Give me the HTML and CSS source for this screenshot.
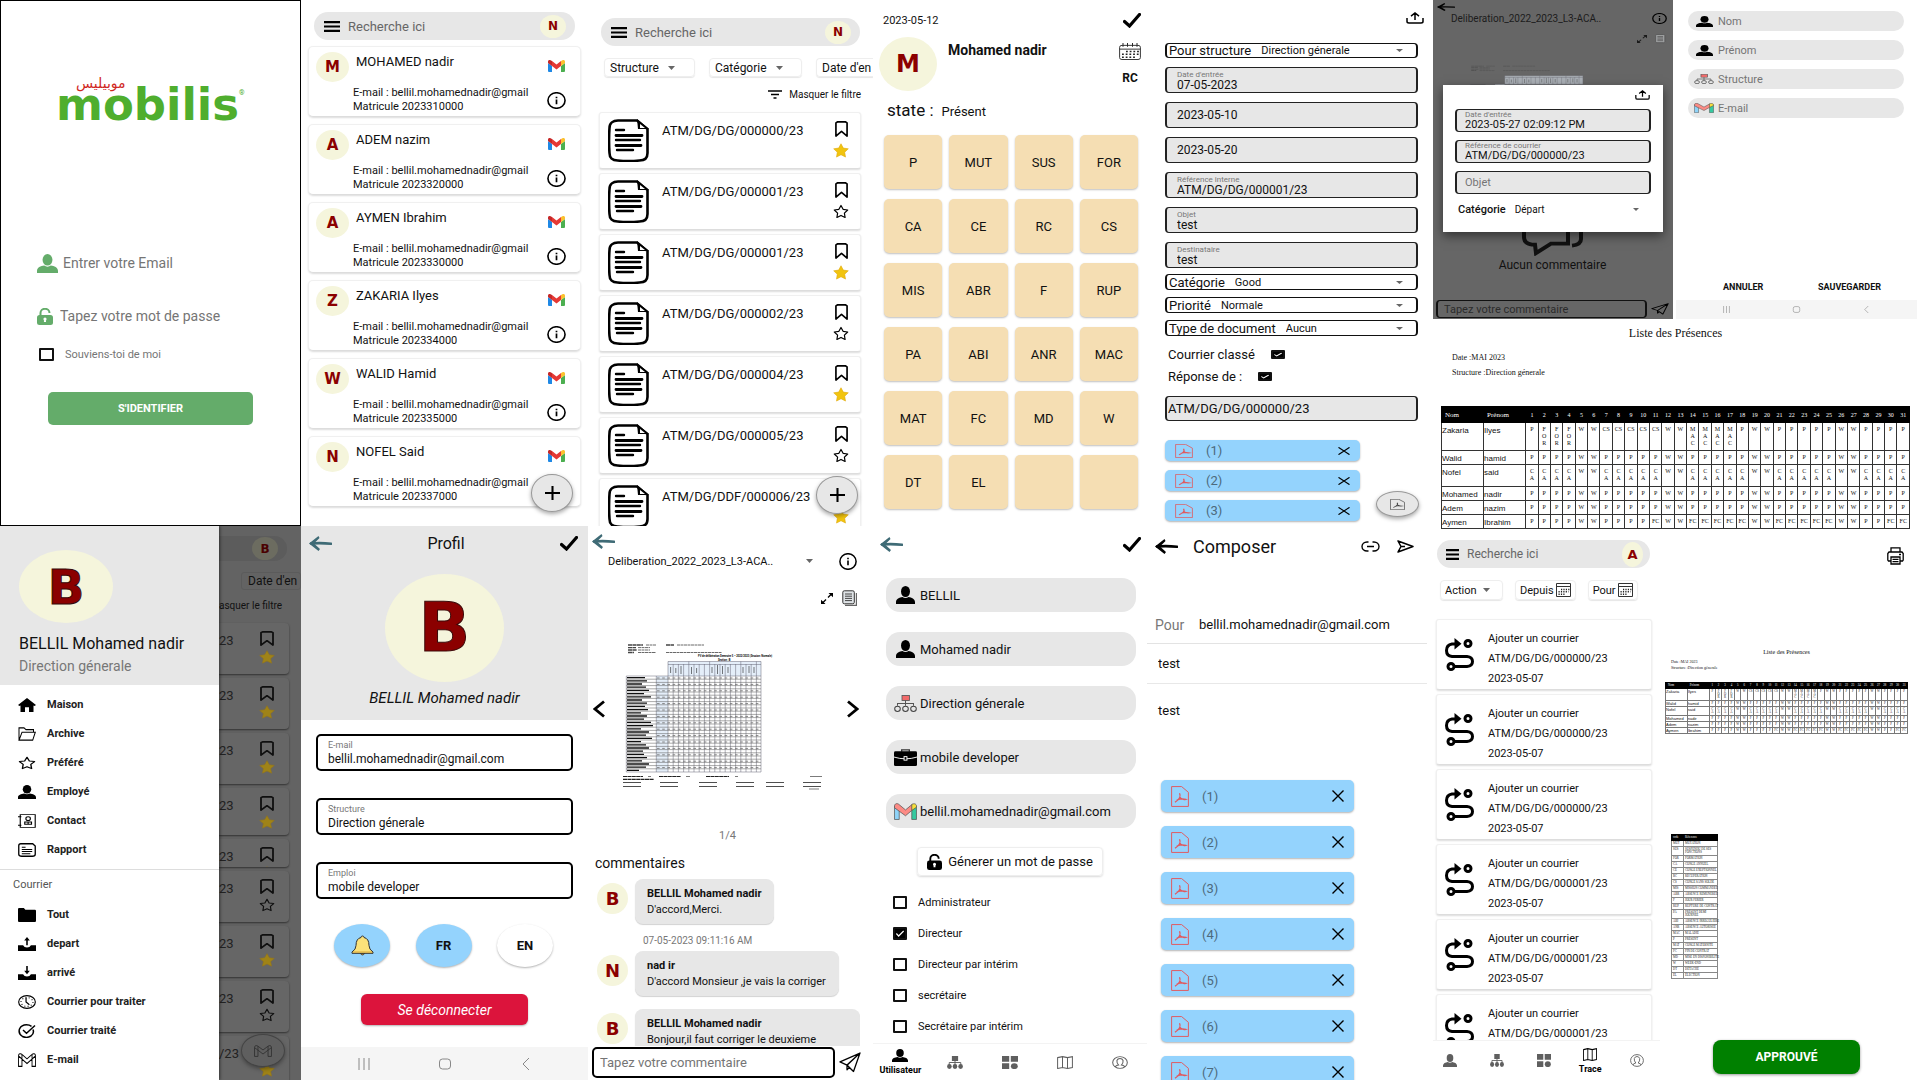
FILE: index.html
```html
<!DOCTYPE html>
<html lang="fr">
<head>
<meta charset="utf-8">
<title>Mobilis – Gestion du courrier</title>
<link rel="stylesheet" href="styles.css">
</head>
<body>
<svg class="sprite" aria-hidden="true">
  <symbol id="user" viewBox="0 0 22 18" preserveAspectRatio="none"><ellipse cx="11" cy="5.5" rx="5.2" ry="5.5"/><path d="M0 18v-2c0-3 4-4.6 7.5-5 2 1.4 5 1.4 7 0 3.500.4 7.500 2 7.500 5v2z"/></symbol>
  <symbol id="lock" viewBox="0 0 16 17" preserveAspectRatio="none"><path d="M3.500 8V5a4.500 4.200 0 0 1 9 0" fill="none" stroke="currentColor" stroke-width="2"/><rect y="7" width="16" height="10" rx="2.500"/><circle cx="8" cy="11" r="1.600" fill="#fff"/><path d="M7.300 11h1.400l.4 3H6.900z" fill="#fff"/></symbol>
  <symbol id="menu" viewBox="0 0 16 11" preserveAspectRatio="none"><path d="M0 1.200h16M0 5.500h16M0 9.800h16" stroke="currentColor" stroke-width="2.200"/></symbol>
  <symbol id="gmail" viewBox="0 0 17 12" preserveAspectRatio="none"><path d="M0 3l4 3v6H1a1 1 0 0 1-1-1z" fill="#1e88e5"/><path d="M17 3l-4 3v6h3a1 1 0 0 0 1-1z" fill="#4caf50"/><path d="M4 1l4.500 3.500L13 1v5L8.500 9.400 4 6z" fill="#e53935"/><path d="M0 3V1.500C0 0 1.800-.5 3 .4L4 1v5z" fill="#c62828"/><path d="M17 3V1.500C17 0 15.200-.5 14 .4L13 1v5z" fill="#fbc02d"/></symbol>
  <symbol id="gmail-soft" viewBox="0 0 22 16" preserveAspectRatio="none"><g stroke="#555" stroke-width=".7"><path d="M.500 3l4.500 4v8.500H.500z" fill="#8fd3f8"/><path d="M21.500 3L17 7v8.500h4.500z" fill="#35c9a0"/><path d="M.500 3C.500.500 3 0 4.500 1.200L11 6.500l6.500-5.300V6.600L11 12 .500 4.500z" fill="#fc8b85"/><path d="M17 7V1.500C19 0 21.500.700 21.500 3v1z" fill="#f7e03c"/></g></symbol>
  <symbol id="gmail-line" viewBox="0 0 20 13" preserveAspectRatio="none"><path d="M.600 2.600v9.800h3.800V5.600L10 9.800l5.600-4.200v6.800h3.800V2.600C19.400.400 17 .200 15.600 1.300L10 5.400 4.400 1.300C3 .200.600.400.600 2.600zM4.400 5.600L.6 2.800M15.600 5.600l3.800-2.800M4.400 1.300v4.300M15.600 1.300v4.300" fill="none" stroke="currentColor"/></symbol>
  <symbol id="info" viewBox="0 0 20 18" preserveAspectRatio="none"><ellipse cx="10" cy="9" rx="9" ry="8.200" fill="none" stroke="currentColor" stroke-width="1.700"/><path d="M10 8v5M10 5v1.600" stroke="currentColor" stroke-width="1.800"/></symbol>
  <symbol id="plus" viewBox="0 0 16 14" preserveAspectRatio="none"><path d="M0 7h16M8 0v14" stroke="currentColor" stroke-width="2.200"/></symbol>
  <symbol id="doc" viewBox="0 0 41 43" preserveAspectRatio="none"><path d="M10 1.500h19L39.500 10v24c0 5-3 7.500-8 7.500-7 .7-15 .7-22 0-5 0-8-2.500-8-7.500-.6-8-.6-17 0-25C1.500 4 5 1.500 10 1.500z" fill="none" stroke="currentColor" stroke-width="2.600"/><path d="M29 0l12 10h-11z" /><path d="M32 5l5 4h-5z" fill="#fff"/><path d="M8 11h8M8 21h24M9 31h16" stroke="currentColor" stroke-width="2.400" stroke-linecap="round"/><path d="M8 16.500h26M8 26.500h25" stroke="currentColor" stroke-width="2.800" stroke-linecap="round"/></symbol>
  <symbol id="mark" viewBox="0 0 14 17" preserveAspectRatio="none"><path d="M2.500 1h9l1.500 1v14l-6-5-6 5V2z" fill="none" stroke="currentColor" stroke-width="1.800" stroke-linejoin="round"/></symbol>
  <symbol id="star" viewBox="0 0 16 16" preserveAspectRatio="none"><path d="M8 .8l2.300 4.600 5 .8-3.600 3.600.8 5.200L8 12.500 3.500 15l.8-5.200L.7 6.200l5-.8z" fill="#f1c40f" stroke="#e0a80b" stroke-width=".6"/></symbol>
  <symbol id="star-line" viewBox="0 0 16 16" preserveAspectRatio="none"><path d="M8 1.500l2.100 4.200 4.600.7-3.300 3.300.7 4.700L8 12.200l-4.100 2.200.7-4.700L1.300 6.400l4.600-.7z" fill="none" stroke="currentColor" stroke-width="1.200" stroke-linejoin="round"/></symbol>
  <symbol id="caret" viewBox="0 0 8 4" preserveAspectRatio="none"><path d="M0 0h8L4 4z" fill="#666"/></symbol>
  <symbol id="filter" viewBox="0 0 14 9" preserveAspectRatio="none"><path d="M0 1h14M3 4.500h8M5.500 8h3" stroke="currentColor" stroke-width="1.400"/></symbol>
  <symbol id="check" viewBox="0 0 18 15" preserveAspectRatio="none"><path d="M1.500 8.500l5 4.500L16.500 1.500" fill="none" stroke="currentColor" stroke-width="3.200" stroke-linecap="round"/></symbol>
  <symbol id="calendar" viewBox="0 0 22 18" preserveAspectRatio="none"><path d="M3 2.500h16q2.400 0 2.400 2v11q0 2-2.400 2H3q-2.400 0-2.400-2v-11q0-2 2.400-2zM.6 6.500h20.800" fill="none" stroke="#333"/><path d="M4 0v4M8.500 0v4M13.500 0v4M18 0v4" stroke="#222"/><path d="M7 9h13M3 12h17M3 15h13" stroke="#222" stroke-width="1.600" stroke-dasharray="1.800 1.900"/></symbol>
  <symbol id="month" viewBox="0 0 15 14" preserveAspectRatio="none"><path d="M.5.500h14v13H.5zM.5 3.500h14" fill="none" stroke="#333"/><path d="M5 6.500h9M2.500 8.800h10M2.500 11.200h7" stroke="#222" stroke-width="1.400" stroke-dasharray="1.200 1.200"/></symbol>
  <symbol id="upload" viewBox="0 0 18 12" preserveAspectRatio="none"><path d="M1 6v3.500Q1 11 3 11h12q2 0 2-1.500V6M9 8V1M5 4.200L9 1l4 3.200" fill="none" stroke="currentColor" stroke-width="1.500"/></symbol>
  <symbol id="pdf" viewBox="0 0 18 22" preserveAspectRatio="none"><path d="M.6.600h10l6.800 6v14.800H.6z" fill="none" stroke="currentColor"/><path d="M8.500 7.500c1.500 3 .5 6-4.500 9.500M8.800 11.500q2 3.500 6 2.500-4-1.500-9 .8" fill="none" stroke="currentColor" stroke-width="1.300"/></symbol>
  <symbol id="cross" viewBox="0 0 12 12" preserveAspectRatio="none"><path d="M.5.500l11 11M11.500.500l-11 11" stroke="currentColor" stroke-width="1.400"/></symbol>
  <symbol id="arrow" viewBox="0 0 23 15" preserveAspectRatio="none"><path d="M2 7.500q10-.8 20 .3" fill="none" stroke="currentColor" stroke-width="2.600" stroke-linecap="round"/><path d="M0 7.500L9.500 0l1 2-5.500 5.500 6 5.500-1.500 2z"/></symbol>
  <symbol id="org" viewBox="0 0 23 16" preserveAspectRatio="none"><path d="M11.500 5v5M3.500 10V8h16v2" fill="none" stroke="#555"/><rect x="8" y=".5" width="7.500" height="4.600" fill="#f26b6b" stroke="#555" stroke-width=".8"/><g fill="none" stroke="#444"><ellipse cx="3.500" cy="13" rx="2.800" ry="2.500"/><ellipse cx="11.500" cy="13" rx="2.800" ry="2.500"/><ellipse cx="19.500" cy="13" rx="2.800" ry="2.500"/></g></symbol>
  <symbol id="org-solid" viewBox="0 0 18 13" preserveAspectRatio="none"><path d="M9 4v6M2.500 10V6.500h13V10" fill="none" stroke="currentColor"/><rect x="5.500" width="7" height="5"/><ellipse cx="2.700" cy="10.500" rx="2.600" ry="2.400"/><ellipse cx="9" cy="10.500" rx="2.600" ry="2.400"/><ellipse cx="15.300" cy="10.500" rx="2.600" ry="2.400"/></symbol>
  <symbol id="case" viewBox="0 0 24 19" preserveAspectRatio="none"><path d="M8 3V1h8v2" fill="none" stroke="#333" stroke-width="1.400"/><rect y="2.500" width="24" height="16.500" rx="1.500"/><path d="M0 9q12 4 24 0" fill="none" stroke="#fff"/><rect x="10.500" y="8.500" width="3" height="4" fill="#000" stroke="#fff"/></symbol>
  <symbol id="expand" viewBox="0 0 12 11" preserveAspectRatio="none"><path d="M7 4.500l4-4M5 6.500l-4 4" stroke="currentColor" stroke-width="1.300"/><path d="M7.500 0H12v4.300zM4.500 11H0V6.700z"/></symbol>
  <symbol id="copy" viewBox="0 0 15 16" preserveAspectRatio="none"><path d="M3 15.500h11.500V3" fill="none" stroke="#666" stroke-width="1.400"/><rect x=".8" y=".8" width="11.500" height="13" rx="1.500" fill="#dfe3e6" stroke="#333"/><path d="M3 4h7M3 6.200h7M3 8.400h7M3 10.600h7" stroke="#333" stroke-width=".9"/></symbol>
  <symbol id="send" viewBox="0 0 22 20" preserveAspectRatio="none"><path d="M21 1L1 9.500l7 3L21 1l-6.500 17.500L8 12.500V17l2.500-2.500" fill="none" stroke="currentColor" stroke-width="1.300" stroke-linejoin="round"/></symbol>
  <symbol id="send-flat" viewBox="0 0 17 13" preserveAspectRatio="none"><path d="M1 1l15 5.500L1 12l3-5.500zM4 6.500h4" fill="none" stroke="currentColor" stroke-width="1.500" stroke-linejoin="round"/></symbol>
  <symbol id="link" viewBox="0 0 19 11" preserveAspectRatio="none"><path d="M7.500 1H6a5 4.500 0 0 0 0 9h1.500M11.500 1H13a5 4.500 0 0 1 0 9h-1.500M6 5.500h7" fill="none" stroke="currentColor" stroke-width="1.400"/></symbol>
  <symbol id="left" viewBox="0 0 12 18" preserveAspectRatio="none"><path d="M11 1.500L2 9l9 7.500" fill="none" stroke="currentColor" stroke-width="2.800"/></symbol>
  <symbol id="home" viewBox="0 0 18 13" preserveAspectRatio="none"><path d="M9 0l9 6.500-1.500 1L15.500 7v6H11V8.500H7V13H2.500V7l-1 .5L0 6.500z"/></symbol>
  <symbol id="open" viewBox="0 0 18 12" preserveAspectRatio="none"><path d="M1 11.300V.700h5L8 2.300h7.500V4.500M1 11.300L4 4.500h13.300l-2.600 6.800z" fill="none" stroke="currentColor"/></symbol>
  <symbol id="folder" viewBox="0 0 17 12" preserveAspectRatio="none"><path d="M0 1Q0 0 1 0h4.500L7 1.500h9q1 0 1 1V11q0 1-1 1H1q-1 0-1-1z"/></symbol>
  <symbol id="contact" viewBox="0 0 16 15" preserveAspectRatio="none"><path d="M2 .700h13.300v13.600H2zM0 3h3M0 12h3" fill="none" stroke="currentColor"/><circle cx="9" cy="5" r="2" fill="none" stroke="currentColor"/><path d="M6 11V8.500h6V11zM9 9v2" fill="none" stroke="currentColor"/></symbol>
  <symbol id="report" viewBox="0 0 19 15" preserveAspectRatio="none"><path d="M3 .800h12.500l2.700 2.500V12q0 2.200-3 2.200H4Q.8 14.200.8 12V3Q.8.800 3 .800z" fill="none" stroke="currentColor" stroke-width="1.400"/><path d="M4 4.500h4M4 7h11M4 9.200h11M4 11.400h9" stroke="currentColor" stroke-width="1.100"/></symbol>
  <symbol id="outbox" viewBox="0 0 16 12" preserveAspectRatio="none"><path d="M0 7h4.500q1 2 3.500 2t3.500-2H16v5H0zM7.300 7V3H5.500L8 0l2.500 3H8.700v4z"/></symbol>
  <symbol id="inbox" viewBox="0 0 16 12" preserveAspectRatio="none"><path d="M0 7h4.500q1 2 3.500 2t3.500-2H16v5H0zM7.300 0v4H5.500L8 7l2.500-3H8.700V0z"/></symbol>
  <symbol id="clock" viewBox="0 0 19 15" preserveAspectRatio="none"><ellipse cx="9.500" cy="7.500" rx="8.800" ry="6.800" fill="none" stroke="currentColor" stroke-width="1.200"/><ellipse cx="9.500" cy="7.500" rx="6.300" ry="4.700" fill="none" stroke="currentColor" stroke-width="1.200" stroke-dasharray="1 2.400"/><path d="M8.500 3v4.500l3.500 3" fill="none" stroke="currentColor" stroke-width="1.300"/></symbol>
  <symbol id="done" viewBox="0 0 18 14" preserveAspectRatio="none"><path d="M15 5.500q1.500 4-2 6.500-4 2.500-8.500.5-4.500-3-3-7.500Q3.500.800 8.500.800q3 0 5 1.600M5 6l3.500 3.200L17 1.500" fill="none" stroke="currentColor" stroke-width="1.500"/></symbol>
  <symbol id="bell" viewBox="0 0 23 21" preserveAspectRatio="none"><path d="M9 18q2.500 4 5 0z" fill="#c98a2b" stroke="#333" stroke-width=".8"/><path d="M11.500 1q1.500 0 1.500 1.500 5 1 5 8 0 4 4 6.500v1.300H1V17q4-2.500 4-6.500 0-7 5-8Q10 1 11.500 1z" fill="#fbe27a" stroke="#333"/><path d="M2 17h19" stroke="#d9a93c"/></symbol>
  <symbol id="tiles" viewBox="0 0 14 12" preserveAspectRatio="none"><path d="M0 0h6.300v5.300H0zM7.700 0H14v5.300H7.700zM0 6.700h6.300V12H0z"/><ellipse cx="10.800" cy="9.400" rx="3" ry="2.700"/></symbol>
  <symbol id="map" viewBox="0 0 16 12" preserveAspectRatio="none"><path d="M.600 1.500L5.500.600l5 .9 4.900-.9v10l-4.900.9-5-.9-4.900.9zM5.500.600v10M10.500 1.500v10" fill="none" stroke="currentColor"/></symbol>
  <symbol id="account" viewBox="0 0 14 13" preserveAspectRatio="none"><ellipse cx="7" cy="6.500" rx="6.400" ry="5.900" fill="none" stroke="currentColor" stroke-width=".9"/><path d="M3 11q0-1.500 2.800-2Q4 7 4.300 4.500 5 2.500 7 2.500t2.700 2Q10 7 8.200 9q2.800.5 2.800 2" fill="none" stroke="currentColor" stroke-width=".9"/></symbol>
  <symbol id="route" viewBox="0 0 29 34" preserveAspectRatio="none"><g fill="none" stroke="currentColor" stroke-width="3"><circle cx="23" cy="5.500" r="3"/><circle cx="6" cy="28.500" r="3"/><path d="M9.500 28.500H22q5.500-.5 5.500-5t-5.500-5H7q-5.500-.5-5.500-6T7 6h7"/></g><path d="M9.500 0l7 5.700-7 5.800z"/></symbol>
  <symbol id="printer" viewBox="0 0 17 18" preserveAspectRatio="none"><path d="M4 5V.8h9V5M4 14H1.500L.8 13V6.500L2 5h13l1.200 1.500V13l-.7 1H13M4 10h9v7H4zM5.500 12.300h6M5.500 14.600h6M12 7.500h2" fill="none" stroke="currentColor" stroke-width="1.300"/></symbol>
  <symbol id="chat" viewBox="0 0 61 58" preserveAspectRatio="none"><path d="M2 2h44v43H29L14 55l-1-9H10q-8-1-8-8zM50 8h9v32q0 6-9 7" fill="none" stroke="currentColor" stroke-width="4"/></symbol>
  <symbol id="sheet" viewBox="0 0 200 148" preserveAspectRatio="none">
    <g stroke="#444"><path d="M5 2h15M5 4.600h8M5 7h9M5 9.500h6M43 2h8" stroke-width="1.400" stroke-dasharray="4 .4"/><path d="M23 2h10M15 4.600h12M15 7h12M15 9.500h18M54 2h27M43 9.500h56" stroke-width=".8" stroke-dasharray="3 .5"/></g>
    <path d="M45 18.500h93V33H45zM33.300 33H45v96H33.300z" fill="#e4eef9"/>
    <g stroke="#667" stroke-width=".5"><path d="M45 18.500h93M45 21.500h93M3.300 33H138M3.300 129H138"/><path d="M45 18.500V129M50.200 21V129M55.400 21V129M60.600 21V129M65.800 18.500V129M71 21V129M76.200 21V129M81.400 21V129M86.600 18.500V129M91.800 21V129M97 21V129M102.200 21V129M107.400 21V129M112.600 21V129M117.800 18.500V129M123 21V129M128.200 21V129M133.400 18.500V129M138 18.500V129M3.300 33V129M33.300 33V129"/></g>
    <g fill="none" stroke="#555" stroke-width=".5"><path d="M3.300 36.200H138M3.300 39.400H138M3.300 42.600H138M3.300 45.800H138M3.300 49H138M3.300 52.200H138M3.300 55.400H138M3.300 58.600H138M3.300 61.800H138M3.300 65H138M3.300 68.200H138M3.300 71.400H138M3.300 74.600H138M3.300 77.800H138M3.300 81H138M3.300 84.200H138M3.300 87.400H138M3.300 90.600H138M3.300 93.800H138M3.300 97H138M3.300 100.200H138M3.300 103.400H138M3.300 106.600H138M3.300 109.800H138M3.300 113H138M3.300 116.200H138M3.300 119.400H138M3.300 122.600H138M3.300 125.800H138"/></g>
    <g fill="none" stroke="#111" stroke-width="1.300"><path d="M4 34.600h18M4 37.800h20M4 41h15M4 44.200h19M4 47.400h22M4 50.600h17M4 53.800h24M4 57h15M4 60.200h20M4 63.400h18M4 66.600h21M4 69.800h14M4 73h20M4 76.200h17M4 79.400h24M4 82.600h26M4 85.800h14M4 89h22M4 92.200h19M4 95.400h25M4 98.600h14M4 101.800h19M4 105h22M4 108.200h16M4 111.400h17M4 114.600h20M4 117.800h15M4 121h22M4 124.200h19M4 127.400h12"/></g>
    <g fill="none" stroke="#777" stroke-width=".9" stroke-dasharray="2.600 2.600"><path d="M34 35H137M34 41.400H137M34 47.800H137M34 54.200H137M34 60.600H137M34 67H137M34 73.400H137M34 79.800H137M34 86.200H137M34 92.600H137M34 99H137M34 105.400H137M34 111.800H137M34 118.200H137M34 124.600H137"/></g>
    <g stroke="#222" fill="none"><path d="M47.600 24v6M52.800 25v5M58 23v8M68.500 24v7M73.600 25v5M89 24v6M94.500 22v9M99.500 23v8M105 24v6M120 24v6M126 23v7M131 24v6" stroke-width=".6"/><path d="M0 133.500h20M36 133.500h22M83 133.500h23M0 136.400h31" stroke-width="1.200" stroke-dasharray="4 .4"/><path d="M25 133.500h3M63 133.500h4M112 133.500h3M187 133.500h12M186 146h10" stroke-width=".6"/><path d="M0 139.500h18M37 139.500h18M76 139.500h18M113 139.500h18M143 139.500h18M180 139.500h18M0 143.500h18M37 143.500h18M76 143.500h18M113 143.500h18M143 143.500h18M180 143.500h18" stroke-width=".8"/></g>
  </symbol>
</svg>

<main class="board">

  <section class="screen login">
    <div class="logo"><span class="logo-ar" lang="ar" dir="rtl">موبيليس</span><span class="logo-row"><span class="logo-word">mobilis</span><span class="logo-reg">®</span></span></div>
    <form class="login-form">
      <label class="login-row"><svg class="i22"><use href="#user"/></svg><input type="email" placeholder="Entrer votre Email"></label>
      <label class="login-row pass"><svg class="i17"><use href="#lock"/></svg><input type="password" placeholder="Tapez votre mot de passe"></label>
      <label class="remember"><input type="checkbox" class="tick">Souviens-toi de moi</label>
      <button type="button" class="login-btn">S'IDENTIFIER</button>
    </form>
  </section>

  <section class="screen contacts">
    <div class="search"><svg><use href="#menu"/></svg><input aria-label="Recherche" placeholder="Recherche ici"><span class="ava ava-s">N</span></div>
    <div class="contact-list" id="contacts"></div>
    <button class="fab" aria-label="Ajouter"><svg><use href="#plus"/></svg></button>
  </section>

  <section class="screen mails">
    <div class="search"><svg><use href="#menu"/></svg><input aria-label="Recherche" placeholder="Recherche ici"><span class="ava ava-s">N</span></div>
    <div class="filters">
      <span class="drop"><select aria-label="Structure"><option>Structure</option></select><svg><use href="#caret"/></svg></span>
      <span class="drop"><select aria-label="Catégorie"><option>Catégorie</option></select><svg><use href="#caret"/></svg></span>
      <button class="drop">Date d'en</button>
    </div>
    <button class="hide-filter"><svg><use href="#filter"/></svg>Masquer le filtre</button>
    <div class="mail-list" id="mails"></div>
    <button class="fab" aria-label="Ajouter"><svg><use href="#plus"/></svg></button>
  </section>

  <section class="screen state">
    <div class="state-top"><span>2023-05-12</span><svg class="i-check"><use href="#check"/></svg></div>
    <div class="state-who"><span class="ava ava-m">M</span><h2>Mohamed nadir</h2><div class="state-code"><svg><use href="#calendar"/></svg><b>RC</b></div></div>
    <p class="state-line"><span>state :</span>Présent</p>
    <div class="codes" id="codes"></div>
  </section>

  <section class="screen record">
    <svg class="i-up"><use href="#upload"/></svg>
    <form class="record-form">
      <label class="pick"><span>Pour structure</span><select><option>Direction génerale</option></select><svg><use href="#caret"/></svg></label>
      <div class="boxes">
        <label class="box"><span>Date d'entrée</span><input value="07-05-2023"></label>
        <div class="box"><input aria-label="Date de départ" value="2023-05-10"></div>
        <div class="box"><input aria-label="Date limite" value="2023-05-20"></div>
        <label class="box"><span>Référence interne</span><input value="ATM/DG/DG/000001/23"></label>
        <label class="box"><span>Objet</span><input value="test"></label>
        <label class="box"><span>Destinataire</span><input value="test"></label>
      </div>
      <div class="picks">
        <label class="pick"><span>Catégorie</span><select><option>Good</option></select><svg><use href="#caret"/></svg></label>
        <label class="pick"><span>Priorité</span><select><option>Normale</option></select><svg><use href="#caret"/></svg></label>
        <label class="pick"><span>Type de document</span><select><option>Aucun</option></select><svg><use href="#caret"/></svg></label>
      </div>
      <label class="flag">Courrier classé<input type="checkbox" class="tick" checked></label>
      <label class="flag">Réponse de :<input type="checkbox" class="tick" checked></label>
      <div class="box reply"><input aria-label="Réponse de" value="ATM/DG/DG/000000/23"></div>
    </form>
    <div class="chips" id="chipsA"></div>
    <button class="fab flat" aria-label="Ajouter un PDF"><svg><use href="#pdf"/></svg></button>
  </section>

  <div class="side">
    <div class="pair">
      <section class="screen dimmed">
        <svg class="d-arrow"><use href="#arrow"/></svg>
        <div class="d-title"><span>Deliberation_2022_2023_L3-ACA..</span><svg class="d-caret"><use href="#caret"/></svg><svg class="d-info"><use href="#info"/></svg></div>
        <div class="d-tools"><svg><use href="#expand"/></svg><svg><use href="#copy"/></svg></div>
        <svg class="d-sheet"><use href="#sheet"/></svg>
        <div class="d-empty"><svg><use href="#chat"/></svg><p>Aucun commentaire</p></div>
        <div class="d-compose"><input aria-label="Commentaire" placeholder="Tapez votre commentaire"><svg><use href="#send"/></svg></div>
        <div class="dialog" role="dialog">
          <svg class="dg-up"><use href="#upload"/></svg>
          <label class="box"><span>Date d'entrée</span><input value="2023-05-27 02:09:12 PM"></label>
          <label class="box"><span>Référence de courrier</span><input value="ATM/DG/DG/000000/23"></label>
          <div class="box"><input aria-label="Objet" placeholder="Objet"></div>
          <label class="dg-cat"><b>Catégorie</b><select><option>Départ</option></select><svg><use href="#caret"/></svg></label>
        </div>
      </section>
      <section class="screen adduser">
        <div class="au-fields">
          <label class="pill"><svg class="p-user"><use href="#user"/></svg><input placeholder="Nom"></label>
          <label class="pill"><svg class="p-user"><use href="#user"/></svg><input placeholder="Prénom"></label>
          <label class="pill"><svg><use href="#org"/></svg><input placeholder="Structure"></label>
          <label class="pill"><svg><use href="#gmail-soft"/></svg><input placeholder="E-mail"></label>
        </div>
        <div class="au-actions"><button>ANNULER</button><button>SAUVEGARDER</button></div>
        <div class="sysbar"><svg viewBox="0 0 12 12"><path d="M1 0v12M6 0v12M11 0v12"/></svg><svg viewBox="0 0 12 12"><rect x=".5" y="1" width="11" height="10" rx="3"/></svg><svg viewBox="0 0 12 12"><path d="M9 0L3 6l6 6"/></svg></div>
      </section>
    </div>
    <section class="screen sheet-big">
      <h1>Liste des Présences</h1>
      <p>Date :MAI 2023</p>
      <p>Structure :Direction génerale</p>
      <table class="att" data-att></table>
    </section>
    <div class="pair low">
      <section class="screen trace">
        <div class="trace-body">
          <div class="search"><svg><use href="#menu"/></svg><input aria-label="Recherche" placeholder="Recherche ici"><span class="ava ava-s">A</span></div>
          <div class="filters">
            <span class="drop"><select aria-label="Action"><option>Action</option></select><svg><use href="#caret"/></svg></span>
            <button class="drop">Depuis<svg class="cal"><use href="#month"/></svg></button>
            <button class="drop">Pour<svg class="cal"><use href="#month"/></svg></button>
          </div>
          <div class="trace-list" id="traces"></div>
        </div>
        <nav class="tabs">
          <a href="#"><svg><use href="#user"/></svg></a><a href="#"><svg><use href="#org-solid"/></svg></a><a href="#"><svg><use href="#tiles"/></svg></a><a href="#" class="on"><svg><use href="#map"/></svg>Trace</a><a href="#"><svg><use href="#account"/></svg></a>
        </nav>
      </section>
      <section class="screen print">
        <svg class="i-print"><use href="#printer"/></svg>
        <h1>Liste des Présences</h1>
        <p>Date :MAI 2023</p>
        <p>Structure :Direction génerale</p>
        <table class="att mini" data-att></table>
        <table class="legend" id="legend"></table>
        <button class="approve">APPROUVÉ</button>
      </section>
    </div>
  </div>

  <section class="screen home">
    <aside class="drawer">
      <header><span class="ava ava-l">B</span><h2>BELLIL Mohamed nadir</h2><p>Direction génerale</p></header>
      <nav>
        <a href="#"><svg><use href="#home"/></svg>Maison</a>
        <a href="#"><svg><use href="#open"/></svg>Archive</a>
        <a href="#"><svg><use href="#star-line"/></svg>Préféré</a>
        <a href="#"><svg><use href="#user"/></svg>Employé</a>
        <a href="#"><svg><use href="#contact"/></svg>Contact</a>
        <a href="#"><svg><use href="#report"/></svg>Rapport</a>
      </nav>
      <h3>Courrier</h3>
      <nav class="second">
        <a href="#"><svg><use href="#folder"/></svg>Tout</a>
        <a href="#"><svg><use href="#outbox"/></svg>depart</a>
        <a href="#"><svg><use href="#inbox"/></svg>arrivé</a>
        <a href="#"><svg><use href="#clock"/></svg>Courrier pour traiter</a>
        <a href="#"><svg><use href="#done"/></svg>Courrier traité</a>
        <a href="#"><svg><use href="#gmail-line"/></svg>E-mail</a>
      </nav>
    </aside>
    <div class="behind">
      <div class="b-search"><span class="ava ava-s">B</span></div>
      <div class="b-date">Date d'en</div>
      <p>asquer le filtre</p>
      <div class="b-list" id="behind"></div>
      <button class="fab" aria-label="E-mail"><svg><use href="#gmail-line"/></svg></button>
    </div>
  </section>

  <section class="screen profile">
    <header>
      <div class="bar"><svg class="i-arrow"><use href="#arrow"/></svg><h2>Profil</h2><svg class="i-check"><use href="#check"/></svg></div>
      <span class="ava ava-xl">B</span>
      <p>BELLIL Mohamed nadir</p>
    </header>
    <div class="p-fields">
      <label><span>E-mail</span><input value="bellil.mohamednadir@gmail.com"></label>
      <label><span>Structure</span><input value="Direction génerale"></label>
      <label><span>Emploi</span><input value="mobile developer"></label>
    </div>
    <div class="p-buttons"><button aria-label="Notifications"><svg><use href="#bell"/></svg></button><button>FR</button><button class="off">EN</button></div>
    <button class="logout">Se déconnecter</button>
    <div class="sysbar"><svg viewBox="0 0 12 12"><path d="M1 0v12M6 0v12M11 0v12"/></svg><svg viewBox="0 0 12 12"><rect x=".5" y="1" width="11" height="10" rx="3"/></svg><svg viewBox="0 0 12 12"><path d="M9 0L3 6l6 6"/></svg></div>
  </section>

  <section class="screen viewer">
    <svg class="i-arrow"><use href="#arrow"/></svg>
    <div class="v-title"><select aria-label="Fichier"><option>Deliberation_2022_2023_L3-ACA..</option></select><svg class="v-caret"><use href="#caret"/></svg><svg class="v-info"><use href="#info"/></svg></div>
    <div class="v-tools"><svg><use href="#expand"/></svg><svg><use href="#copy"/></svg></div>
    <div class="v-page"><svg class="v-nav"><use href="#left"/></svg>
      <svg class="v-sheet" viewBox="0 0 200 148"><use href="#sheet" width="200" height="148"/><text x="75" y="13.500" font-size="2.600" font-weight="700">PV de délibération Semestre 5 – 2022/2023 (Session: Normale)</text><text x="95" y="17.500" font-size="2.600" font-weight="700">Section : B</text></svg>
      <svg class="v-nav next"><use href="#left"/></svg></div>
    <p class="v-count">1/4</p>
    <h3>commentaires</h3>
    <div class="comments">
      <div class="com"><span class="ava ava-c">B</span><div><b>BELLIL Mohamed nadir</b>D'accord,Merci.</div></div>
      <time>07-05-2023 09:11:16 AM</time>
      <div class="com"><span class="ava ava-c">N</span><div><b>nad ir</b>D'accord Monsieur ,je vais la corriger</div></div>
      <div class="com last"><span class="ava ava-c">B</span><div><b>BELLIL Mohamed nadir</b>Bonjour,il faut corriger le deuxieme</div></div>
    </div>
    <div class="compose"><input aria-label="Commentaire" placeholder="Tapez votre commentaire"><svg><use href="#send"/></svg></div>
  </section>

  <section class="screen employee">
    <div class="emp-body">
      <div class="bar"><svg class="i-arrow"><use href="#arrow"/></svg><svg class="i-check"><use href="#check"/></svg></div>
      <div class="emp-fields">
        <label class="pill"><svg class="p-user"><use href="#user"/></svg><input aria-label="Nom" value="BELLIL"></label>
        <label class="pill"><svg class="p-user"><use href="#user"/></svg><input aria-label="Prénom" value="Mohamed nadir"></label>
        <label class="pill"><svg><use href="#org"/></svg><input aria-label="Structure" value="Direction génerale"></label>
        <label class="pill"><svg><use href="#case"/></svg><input aria-label="Emploi" value="mobile developer"></label>
        <label class="pill"><svg><use href="#gmail-soft"/></svg><input aria-label="E-mail" value="bellil.mohamednadir@gmail.com"></label>
      </div>
      <button class="gen"><svg><use href="#lock"/></svg>Génerer un mot de passe</button>
      <div class="roles">
        <label><input type="checkbox" class="tick">Administrateur</label>
        <label><input type="checkbox" class="tick" checked>Directeur</label>
        <label><input type="checkbox" class="tick">Directeur par intérim</label>
        <label><input type="checkbox" class="tick">secrétaire</label>
        <label><input type="checkbox" class="tick">Secrétaire par intérim</label>
      </div>
    </div>
    <nav class="tabs">
      <a href="#" class="on"><svg><use href="#user"/></svg>Utilisateur</a><a href="#"><svg><use href="#org-solid"/></svg></a><a href="#"><svg><use href="#tiles"/></svg></a><a href="#"><svg><use href="#map"/></svg></a><a href="#"><svg><use href="#account"/></svg></a>
    </nav>
  </section>

  <section class="screen composer">
    <div class="bar"><svg class="i-arrow"><use href="#arrow"/></svg><h2>Composer</h2><svg class="i-link"><use href="#link"/></svg><svg class="i-send"><use href="#send-flat"/></svg></div>
    <label class="to"><span>Pour</span><input value="bellil.mohamednadir@gmail.com"></label>
    <input class="subject" aria-label="Objet" value="test">
    <textarea class="body" aria-label="Message">test</textarea>
    <div class="chips tall" id="chipsB"></div>
  </section>
</main>
<script src="script.js"></script>
</body>
</html>
```
FILE: styles.css
```css
* { box-sizing: border-box; }
body { margin: 0; font-family: Roboto, "Liberation Sans", sans-serif; font-size: 11px; color: #111; background: #fff; }
h1, h2, h3, p { margin: 0; font-weight: 400; }
button, input, select, textarea { font: inherit; color: inherit; background: none; border: 0; padding: 0; margin: 0; outline: 0; min-width: 0; }
select { appearance: none; }
a { color: inherit; text-decoration: none; }
svg { display: block; flex: none; fill: currentColor; color: #000; overflow: visible; }
::placeholder { color: #757575; opacity: 1; }
.sprite { position: absolute; width: 0; height: 0; overflow: hidden; }

.board { display: grid; height: 100vh; overflow: hidden;
  grid-template-columns: minmax(0, 301fr) minmax(0, 287fr) minmax(0, 285fr) minmax(0, 274fr) minmax(0, 286fr) minmax(0, 487fr);
  grid-template-rows: minmax(0, 526fr) minmax(0, 554fr); }
.screen { position: relative; overflow: hidden; min-width: 0; min-height: 0; background: #fff; }
.side { grid-column: 6; grid-row: 1 / 3; display: grid; grid-template-rows: minmax(0, 319fr) minmax(0, 211fr) minmax(0, 550fr); }
.pair { display: grid; grid-template-columns: minmax(0, 240fr) minmax(0, 241fr); column-gap: 3px; padding-right: 3px; }
.pair.low { grid-template-columns: minmax(0, 227fr) minmax(0, 260fr); column-gap: 0; padding-right: 0; }

/* shared pieces */
.ava { display: flex; align-items: center; justify-content: center; flex: none; border-radius: 50%; background: #f5f5dc; color: #8b0000; font-family: "DejaVu Sans", sans-serif; font-weight: 700; line-height: 1; }
.ava-s { width: 26px; height: 23px; font-size: 12px; }
.ava-r { width: 33px; height: 30px; font-size: 15px; }
.ava-m { width: 58px; height: 54px; font-size: 24px; }
.ava-l { width: 94px; height: 73px; font-size: 48px; -webkit-text-stroke: 1px #3a0a0a; }
.ava-xl { width: 119px; height: 108px; font-size: 68px; -webkit-text-stroke: 1px #3a0a0a; }
.ava-c { width: 31px; height: 31px; font-size: 18px; }
.search { display: flex; align-items: center; height: 28px; padding: 0 9px 0 10px; border-radius: 14px; background: #e7e7e7; }
.search > svg { width: 16px; height: 11px; margin-right: 8px; }
.search input { flex: 1; width: 0; font-size: 13px; }
.search ::placeholder { color: #666; }
.fab { position: absolute; display: flex; align-items: center; justify-content: center; width: 42px; height: 38px; border: 1px solid #999; border-radius: 50%; background: #e7e7e7; box-shadow: 0 2px 4px rgba(0, 0, 0, .35); }
.fab svg { width: 15px; height: 14px; }
.filters { display: flex; font-size: 12px; }
.drop { display: flex; align-items: center; flex: none; height: 19px; padding: 0 5px; border: 1px solid #eee; border-radius: 4px; box-shadow: 0 1px 1px rgba(0, 0, 0, .1); white-space: nowrap; }
.drop > svg { width: 7px; height: 4px; }
.card { border: 1px solid #f0f0f0; border-bottom-color: #ddd; border-radius: 5px; background: #fff; box-shadow: 0 1px 2px rgba(0, 0, 0, .14); }
.tick { appearance: none; flex: none; width: 15px; height: 13px; border: 2px solid #111; border-radius: 1px; background: #fff; }
.tick:checked { background: #000 url('data:image/svg+xml,<svg xmlns="http://www.w3.org/2000/svg" viewBox="0 0 11 9" preserveAspectRatio="none"><path d="M1.500 4.500l2.500 2.500 5.500-5" fill="none" stroke="white" stroke-width="1.300"/></svg>') center / 100% 100% no-repeat; }
.i-check { width: 18px; height: 15px; }
.i-arrow { width: 23px; height: 15px; color: #3f6b76; }
.bar { display: flex; align-items: center; }
.box { display: flex; flex-direction: column; justify-content: center; border: 1px solid #222; border-width: 1px 2px; border-radius: 4px; background: #e7e7e7; }
.box span { font-size: 8px; line-height: 9px; color: #777; }
.box input { font-size: 12px; line-height: 12px; height: 12px; width: 100%; }
.pill { display: flex; align-items: center; background: #e7e7e7; }
.pill input { flex: 1; width: 0; }
.sysbar { display: flex; justify-content: space-around; align-items: center; background: #f5f5f5; }
.sysbar svg { width: 12px; height: 12px; fill: none; stroke: #888; }
.tabs { display: flex; flex: none; align-items: center; border-top: 1px solid #f3f3f3; background: #fff; font-size: 9px; line-height: 10px; font-weight: 700; color: #000; }
.tabs a { display: flex; flex-direction: column; align-items: center; }
.tabs svg { width: 16px; height: 13px; color: #5f5f5f; }
.tabs .on svg { color: #000; margin-bottom: 3px; }

/* login */
.login { border: 1px solid #000; }
.logo { display: flex; flex-direction: column; margin: 75px 0 0 55px; height: 43px; }
.logo-ar { align-self: flex-start; margin-left: 20px; font: 14px/14px "DejaVu Sans", sans-serif; color: #d0281e; }
.logo-row { display: flex; }
.logo-word { font: 700 45px/30px "DejaVu Sans", sans-serif; color: #4fae2e; }
.logo-reg { font-size: 7px; line-height: 7px; color: #4fae2e; }
.login-form { display: flex; flex-direction: column; padding: 132px 47px 0 36px; }
.login-row { display: flex; align-items: center; height: 24px; gap: 5px; }
.login-row input { flex: 1; width: 0; height: 24px; font-size: 14px; }
.login-row svg { color: #64ac6a; }
.i22 { width: 21px; height: 19px; }
.i17 { width: 16px; height: 17px; }
.login-row.pass { margin-top: 29px; gap: 7px; }
.remember { display: flex; align-items: center; gap: 11px; height: 20px; margin: 16px 0 0 2px; color: #757575; }
.login-btn { height: 33px; margin: 28px 0 0 11px; border-radius: 5px; background: #64ac6a; color: #fff; font-weight: 700; }

/* contacts */
.contacts { padding: 12px 7px 0; }
.contacts .search { margin: 0 6px; }
.contact-list { display: flex; flex-direction: column; gap: 7px; margin-top: 6px; }
.contact { display: grid; grid-template-columns: 33px minmax(0, 1fr) 20px; column-gap: 4px; flex: none; height: 71px; padding: 5px 14px 0 7px; }
.contact h3 { padding-left: 3px; font-size: 13px; line-height: 19px; }
.contact p { line-height: 14px; white-space: nowrap; }
.contact h3 + p { margin-top: 15px; }
.contact .acts { display: flex; flex-direction: column; align-items: center; gap: 20px; padding-top: 8px; }
.acts svg:first-child { width: 17px; height: 12px; }
.acts svg + svg { width: 19px; height: 17px; }
.contacts .fab { right: 15px; bottom: 14px; }

/* mails */
.mails { padding: 18px 12px 0 11px; }
.mails .search { margin: 0 1px 0 2px; }
.mails .filters { gap: 14px; margin: 12px -12px 0 5px; }
.mails .drop:nth-child(1) { width: 91px; }
.mails .drop:nth-child(2) { width: 93px; }
.mails .drop:nth-child(3) { flex: 1; padding-right: 0; border-right: 0; border-radius: 4px 0 0 4px; }
.mails .drop select { margin-right: 9px; }
.hide-filter { display: flex; align-items: center; gap: 7px; height: 16px; margin: 9px 0 0 auto; font-size: 10px; }
.hide-filter svg { width: 14px; height: 9px; }
.mail-list { display: flex; flex-direction: column; gap: 4px; margin-top: 10px; }
.mail { display: flex; flex: none; height: 57px; padding: 6px 11px 0 8px; border-radius: 3px; }
.mail > svg { width: 41px; height: 43px; }
.mail span { flex: 1; padding-left: 13px; font-size: 13px; line-height: 24px; white-space: nowrap; }
.marks { display: flex; flex-direction: column; align-items: center; gap: 6px; padding-top: 2px; }
.marks svg { width: 13px; height: 16px; }
.marks svg + svg { width: 16px; height: 15px; }
.mails .fab { right: 15px; bottom: 12px; }

/* state */
.state { padding: 8px 6px 0; }
.state-top { display: flex; align-items: center; justify-content: space-between; height: 24px; padding-left: 4px; }
.state-who { display: flex; margin-top: 5px; }
.state-who h2 { flex: 1; padding: 4px 0 0 11px; font-size: 14px; line-height: 18px; font-weight: 700; }
.state-code { display: flex; flex-direction: column; align-items: center; gap: 10px; padding-top: 6px; font-size: 12px; line-height: 16px; }
.state-code svg { width: 22px; height: 17px; }
.state-line { display: flex; align-items: baseline; gap: 8px; margin: 8px 0 0 8px; font-size: 13px; line-height: 22px; }
.state-line span { font-size: 17px; }
.codes { display: grid; grid-template-columns: repeat(4, minmax(0, 1fr)); gap: 10px 7px; margin: 12px 3px 0 5px; }
.codes button { height: 54px; border-radius: 5px; background: #f5deb3; box-shadow: 0 1px 2px rgba(0, 0, 0, .25); font-size: 13px; }

/* record form */
.record { padding: 12px 15px 0 18px; }
.i-up { width: 18px; height: 12px; margin: 0 -6px 0 auto; }
.record-form { margin-top: 19px; }
.pick { display: flex; align-items: center; height: 15px; padding: 0 13px 0 2px; border: 1px solid #111; border-width: 1px 2px; border-radius: 4px; }
.pick span { font-size: 13px; line-height: 13px; margin-right: 10px; white-space: nowrap; }
.pick select { flex: 1; width: 0; height: 13px; }
.pick svg { width: 7px; height: 3px; }
.boxes { display: flex; flex-direction: column; gap: 9px; margin-top: 9px; }
.record .box { height: 26px; padding-left: 10px; }
.picks { display: flex; flex-direction: column; gap: 7px; margin-top: 6px; }
.picks .pick { height: 16px; }
.picks + .flag { margin-top: 7px; }
.flag { display: flex; align-items: center; gap: 16px; height: 22px; padding-left: 3px; font-size: 13px; }
.flag .tick { width: 14px; height: 9px; }
.record .box.reply { height: 25px; margin-top: 9px; padding-left: 1px; }
.record .reply input { font-size: 13px; height: 15px; }
.chips { display: flex; flex-direction: column; gap: 9px; margin-top: 19px; }
.chip { display: flex; align-items: center; flex: none; width: 195px; height: 21px; padding: 0 10px; border-radius: 5px; background: #94d3fd; box-shadow: 0 1px 2px rgba(0, 0, 0, .3); color: #4d6a7c; font-size: 13px; }
.chip > svg { width: 18px; height: 14px; margin-right: 13px; color: #e05a5f; }
.chip span { flex: 1; }
.chip button svg { width: 12px; height: 8px; }
.fab.flat { right: 14px; bottom: 9px; width: 43px; height: 26px; }
.fab.flat svg { width: 15px; height: 11px; color: #444; }

/* dimmed viewer with dialog */
.dimmed { display: flex; flex-direction: column; background: #666; padding: 3px 4px 1px 3px; }
.d-arrow { width: 18px; height: 8px; margin-left: 1px; }
.d-title { display: flex; align-items: center; height: 14px; padding-left: 15px; font-size: 10px; color: #1c1c1c; }
.d-title span { flex: 1; }
.d-title .d-caret { width: 6px; height: 3px; margin-right: 24px; }
.d-caret use { fill: #333; }
.d-info { width: 15px; height: 11px; margin-right: 2px; }
.d-tools { display: flex; justify-content: flex-end; align-items: center; gap: 8px; height: 16px; margin: 6px 2px 0 0; opacity: .75; }
.d-tools svg { width: 10px; height: 8px; }
.d-tools svg + svg { width: 12px; height: 10px; opacity: .6; }
.d-sheet { width: 168px; height: 86px; margin: 18px 0 0 31px; opacity: .55; }
.d-empty { display: flex; flex-direction: column; align-items: center; margin: auto 0 26px; font-size: 12px; line-height: 18px; }
.d-empty svg { width: 61px; height: 55px; color: #111; }
.d-compose { display: flex; align-items: center; gap: 4px; }
.d-compose input { flex: 1; height: 18px; padding-left: 6px; border: 2px solid #111; border-width: 1px 2px; border-radius: 4px; }
.d-compose ::placeholder { color: #2b2b2b; }
.d-compose svg { width: 18px; height: 12px; }
.dialog { position: absolute; left: 10px; right: 10px; top: 85px; height: 147px; padding: 5px 12px 0; background: #fff; box-shadow: 0 4px 10px rgba(0, 0, 0, .5); }
.dg-up { width: 15px; height: 10px; margin: 0 1px 9px auto; }
.dialog .box { height: 23px; padding-left: 8px; margin-bottom: 8px; }
.dialog .box input { font-size: 11px; }
.dg-cat { display: flex; align-items: center; gap: 9px; height: 14px; padding: 0 12px 0 3px; font-size: 10px; }
.dg-cat b { font-size: 11px; font-weight: 500; }
.dg-cat select { flex: 1; width: 0; }
.dg-cat svg { width: 6px; height: 3px; }

/* new user */
.adduser { display: flex; flex-direction: column; padding-top: 11px; }
.au-fields { display: flex; flex-direction: column; gap: 9px; padding: 0 13px 0 12px; }
.au-fields .pill { height: 20px; padding-left: 6px; border-radius: 10px; gap: 4px; }
.au-fields svg { width: 20px; height: 10px; }
.au-fields .p-user { width: 17px; height: 11px; margin: 0 1px 0 2px; }
.au-actions { display: flex; justify-content: space-between; margin-top: auto; padding: 0 36px 0 47px; font-size: 9px; font-weight: 700; }
.au-actions button { height: 14px; }
.adduser .sysbar { height: 19px; margin-top: 6px; padding: 0 16px; }
.adduser .sysbar svg { width: 11px; height: 7px; }

/* attendance */
.sheet-big { padding: 4px 10px 0 8px; font-family: "Liberation Serif", serif; }
.sheet-big h1 { font-size: 12px; line-height: 20px; text-align: center; }
.sheet-big p { padding-left: 11px; font-size: 8px; line-height: 15px; }
.sheet-big h1 + p { margin-top: 7px; }
.att { width: 100%; margin-top: 26px; border-collapse: collapse; table-layout: fixed; font-family: "Liberation Serif", serif; font-size: 6px; line-height: 7px; }
.att th, .att td { padding: 3px 0 0; border: 1px solid #333; vertical-align: top; text-align: center; font-weight: 400; overflow: hidden; }
.att th { height: 16px; padding-top: 5px; border-color: #000; background: #000; color: #fff; }
.att td { height: 14px; }
.att .nm { width: 9%; }
.att th.nm { padding-left: 3px; text-align: left; font-size: 7px; }
.att td.nm { padding-top: 3px; font: 8px/9px "Liberation Sans", sans-serif; text-align: left; }
.att .tall td { height: 28px; }
.att .mid td { height: 22px; }

/* trace */
.trace { display: flex; flex-direction: column; }
.trace-body { flex: 1; min-height: 0; overflow: hidden; padding: 10px 8px 0 3px; }
.trace .search { margin: 0 2px 0 1px; padding: 0 7px 0 9px; }
.trace .search > svg { width: 13px; }
.trace .search input { font-size: 12px; }
.trace .ava-s { width: 21px; height: 25px; font-size: 13px; }
.trace .filters { gap: 12px; margin: 12px 0 0 4px; font-size: 11px; }
.trace .drop { height: 20px; padding: 0 4px; }
.trace .drop:first-child { width: 63px; }
.trace .drop select { margin-right: 6px; }
.trace .drop .cal { width: 15px; height: 14px; margin-left: 2px; }
.trace-list { display: flex; flex-direction: column; gap: 4px; margin-top: 19px; }
.tr { display: flex; flex: none; height: 71px; padding: 9px 0 0 8px; border-radius: 3px; line-height: 20px; }
.tr svg { width: 29px; height: 34px; margin: 9px 14px 0 0; }
.tr p { white-space: pre-line; }
.trace .tabs { height: 40px; justify-content: space-between; padding: 0 14px 0 8px; }
.trace .tabs a { width: 18px; }
.trace .tabs svg { width: 14px; }

/* printable report */
.print { display: flex; flex-direction: column; padding: 17px 12px 6px 5px; font-family: "Liberation Serif", serif; }
.i-print { width: 17px; height: 18px; margin: 0 4px 0 auto; }
.print h1 { margin-top: 83px; font-size: 6px; line-height: 8px; text-align: center; }
.print p { padding-left: 6px; font-size: 4px; line-height: 6px; }
.print h1 + p { margin-top: 3px; }
.mini { margin-top: 11px; font-size: 3px; line-height: 3px; }
.mini th, .mini td { padding: 1px 0 0; border-color: #777; }
.mini th { height: 6px; padding-top: 1px; border-color: #000; }
.mini td { height: 6px; }
.mini th.nm { font-size: 3px; padding-left: 2px; }
.mini td.nm { padding-top: 1px; font-size: 4px; line-height: 4px; }
.mini .tall td { height: 12px; }
.mini .mid td { height: 9px; }
.legend { width: 47px; margin: 100px 0 0 6px; border-collapse: collapse; table-layout: fixed; font-size: 3px; line-height: 3px; white-space: nowrap; }
.legend th, .legend td { height: 6px; padding: 1px 0 0 1px; border: 1px solid #888; text-align: left; font-weight: 400; vertical-align: top; }
.legend th { background: #000; color: #fff; border-color: #000; }
.legend th:first-child { width: 12px; }
.legend .two td { height: 9px; }
.approve { width: 147px; height: 34px; margin: auto auto 0 48px; flex: none; border-radius: 8px; background: #008000; box-shadow: 0 1px 3px rgba(0, 0, 0, .4); color: #fff; font-family: Roboto, sans-serif; font-size: 12px; font-weight: 700; }

/* home with drawer */
.home { display: grid; grid-template-columns: minmax(0, 219fr) minmax(0, 82fr); background: #666; }
.drawer { background: #fff; box-shadow: 1px 0 3px rgba(0, 0, 0, .5); z-index: 1; }
.drawer header { height: 159px; padding: 24px 0 0 19px; background: #e7e7e7; }
.drawer h2 { margin-top: 10px; font-size: 16px; line-height: 22px; }
.drawer header p { font-size: 14px; line-height: 22px; color: #777; }
.drawer nav { padding: 5px 0; border-bottom: 1px solid #ddd; }
.drawer a { display: flex; align-items: center; gap: 11px; height: 29px; padding-left: 18px; font-weight: 700; color: #222; }
.drawer nav svg { width: 18px; height: 14px; }
.drawer h3 { padding-left: 13px; font-size: 11px; line-height: 30px; color: #555; }
.drawer .second { padding: 0; border: 0; }
.behind { position: relative; padding: 10px 12px 0 0; background: #636363; overflow: hidden; }
.b-search { display: flex; align-items: center; justify-content: flex-end; height: 25px; padding-right: 9px; margin-right: 2px; border-radius: 0 13px 13px 0; background: #5c5c5c; }
.behind .ava { background: #6c6c60; color: #4a0000; }
.b-date { height: 18px; margin: 11px -12px 0 22px; padding-left: 6px; border: 1px solid #5b5b5b; border-radius: 3px; font-size: 12px; line-height: 16px; white-space: nowrap; }
.behind p { height: 16px; margin-top: 8px; font-size: 10px; line-height: 16px; }
.b-list { display: flex; flex-direction: column; gap: 4px; margin-top: 9px; }
.b-card { display: flex; justify-content: space-between; flex: none; height: 51px; padding: 8px 14px 0 0; border-radius: 0 4px 4px 0; background: #666; box-shadow: 0 1px 2px rgba(0, 0, 0, .5); overflow: hidden; font-size: 13px; line-height: 19px; color: #222; }
.b-card.cut { height: 47px; }
.b-card.short { height: 28px; }
.b-card .marks { padding: 0; gap: 4px; opacity: .85; }
.b-card .marks svg { width: 14px; height: 15px; }
.b-card .marks svg + svg { width: 16px; height: 14px; }
.b-card .gold { filter: brightness(.7); }
.behind .fab { right: 16px; bottom: 13px; width: 44px; height: 33px; background: #5f5f5f; border-color: #444; }
.behind .fab svg { width: 18px; height: 12px; color: #333; }

/* profile */
.profile { display: flex; flex-direction: column; }
.profile header { display: flex; flex-direction: column; align-items: center; height: 194px; background: #e7e7e7; }
.profile .bar { align-self: stretch; justify-content: space-between; height: 34px; padding: 0 10px 0 8px; }
.profile h2 { font-size: 16px; }
.profile .ava { margin-top: 14px; }
.profile header p { font-size: 15px; font-style: italic; line-height: 20px; margin-top: 6px; }
.p-fields { display: flex; flex-direction: column; gap: 27px; padding: 14px 15px 0; }
.p-fields label { display: flex; flex-direction: column; height: 37px; padding: 4px 10px 0; border: 2px solid #000; border-radius: 5px; }
.p-fields span { font-size: 9px; line-height: 11px; color: #777; }
.p-fields input { font-size: 12px; height: 15px; }
.p-buttons { display: flex; justify-content: space-between; padding: 25px 35px 0 33px; }
.p-buttons button { display: flex; align-items: center; justify-content: center; width: 56px; height: 43px; border-radius: 50%; background: #94d3fd; box-shadow: 0 1px 2px rgba(0, 0, 0, .3); font-size: 13px; font-weight: 700; }
.p-buttons .off { background: #fff; }
.p-buttons svg { width: 23px; height: 21px; }
.logout { width: 167px; height: 31px; margin: 27px auto 0; border-radius: 6px; background: #dc143c; box-shadow: 0 1px 2px rgba(0, 0, 0, .3); color: #fff; font-size: 14px; font-style: italic; }
.profile .sysbar { height: 33px; margin-top: auto; padding: 0 22px; }

/* viewer */
.viewer { display: flex; flex-direction: column; padding: 8px 13px 2px 4px; }
.v-title { display: flex; align-items: center; height: 20px; margin-top: 2px; padding-left: 16px; }
.v-title select { flex: 1; width: 0; }
.v-caret { width: 7px; height: 4px; margin-right: 26px; }
.v-info { width: 18px; height: 17px; margin-right: 3px; }
.v-tools { display: flex; align-items: center; justify-content: flex-end; gap: 9px; height: 18px; margin: 18px 3px 0 0; }
.v-tools svg { width: 12px; height: 11px; }
.v-tools svg + svg { width: 15px; height: 16px; }
.v-page { display: flex; align-items: center; margin-top: 36px; padding-left: 1px; }
.v-nav { width: 12px; height: 18px; margin-bottom: 17px; }
.v-nav.next { margin-left: 24px; transform: scaleX(-1); }
.v-sheet { width: 200px; height: 148px; margin-left: 18px; }
.v-count { margin-top: 37px; padding-left: 127px; line-height: 16px; color: #777; }
.viewer h3 { margin-top: 9px; padding-left: 3px; font-size: 14px; line-height: 20px; }
.comments { flex: 1; min-height: 0; margin-top: 6px; overflow: hidden; }
.com { display: flex; gap: 7px; padding-left: 5px; }
.com .ava { margin-top: 4px; }
.com div { display: flex; flex-direction: column; padding: 7px 13px 6px 12px; border-radius: 8px; background: #e7e7e7; box-shadow: 0 1px 1px rgba(0, 0, 0, .18); line-height: 16px; white-space: nowrap; }
.comments time { display: block; height: 27px; padding: 10px 0 0 51px; font-size: 10px; line-height: 14px; color: #777; }
.com.last { margin-top: 13px; }
.com.last div { flex: 1; }
.compose { display: flex; align-items: center; gap: 4px; margin-top: 1px; margin-right: -1px; }
.compose input { flex: 1; height: 31px; padding-left: 6px; border: 2px solid #000; border-radius: 5px; font-size: 13px; }
.compose svg { width: 22px; height: 21px; }

/* employee */
.employee { display: flex; flex-direction: column; }
.emp-body { flex: 1; min-height: 0; overflow: hidden; }
.employee .bar { justify-content: space-between; height: 36px; padding: 0 6px 0 7px; }
.emp-fields { display: flex; flex-direction: column; gap: 20px; padding: 16px 11px 0 13px; }
.emp-fields .pill { height: 34px; padding-left: 8px; border-radius: 14px; gap: 3px; font-size: 13px; }
.emp-fields svg { width: 23px; height: 17px; }
.emp-fields .p-user { width: 19px; height: 18px; margin: 0 2px; }
.gen { display: flex; align-items: center; justify-content: center; gap: 6px; width: 186px; height: 29px; margin: 19px auto 0; border: 1px solid #eee; border-radius: 4px; box-shadow: 0 1px 2px rgba(0, 0, 0, .15); font-size: 13px; }
.gen svg { width: 15px; height: 16px; }
.roles { display: flex; flex-direction: column; gap: 11px; margin-top: 16px; padding-left: 20px; }
.roles label { display: flex; align-items: center; gap: 11px; height: 20px; }
.roles .tick { width: 14px; }
.employee .tabs { height: 37px; }
.employee .tabs a { flex: 1; }

/* composer */
.composer { padding-right: 6px; }
.composer .bar { height: 40px; padding: 0 13px 0 8px; }
.composer .i-arrow { color: #000; }
.composer h2 { flex: 1; padding-left: 15px; font-size: 18px; }
.i-link { width: 19px; height: 11px; margin-right: 17px; }
.i-send { width: 17px; height: 13px; }
.to { display: flex; align-items: center; height: 38px; margin-top: 40px; padding-left: 8px; border-bottom: 1px solid #e3e3e3; font-size: 13px; }
.to span { width: 44px; font-size: 14px; color: #777; }
.to input { flex: 1; }
.subject { width: 100%; height: 40px; padding-left: 11px; border-bottom: 1px solid #e8e8e8; font-size: 13px; }
.body { display: block; width: 100%; height: 60px; padding: 18px 0 0 11px; resize: none; font-size: 13px; line-height: 18px; overflow: hidden; }
.chips.tall { gap: 14px; margin: 36px 0 0 14px; }
.tall .chip { width: 193px; height: 32px; }
.tall .chip > svg { height: 21px; }
.tall .chip button svg { height: 12px; }
```
FILE: script.js
```js
const icon = (id, cls = '') => `<svg class="${cls}"><use href="#${id}"/></svg>`;
const fill = (id, html) => { document.getElementById(id).innerHTML = html; };

const contacts = [
  ['MOHAMED nadir', '2023310000'], ['ADEM nazim', '2023320000'], ['AYMEN Ibrahim', '2023330000'],
  ['ZAKARIA Ilyes', '202334000'], ['WALID Hamid', '202335000'], ['NOFEL Said', '202337000']
];
fill('contacts', contacts.map(([name, id]) => `<article class="card contact"><span class="ava ava-r">${name[0]}</span>
  <div><h3>${name}</h3><p>E-mail : bellil.mohamednadir@gmail</p><p>Matricule ${id}</p></div>
  <div class="acts">${icon('gmail')}${icon('info')}</div></article>`).join(''));

const mails = [
  ['ATM/DG/DG/000000/23', 1], ['ATM/DG/DG/000001/23', 0], ['ATM/DG/DG/000001/23', 1], ['ATM/DG/DG/000002/23', 0],
  ['ATM/DG/DG/000004/23', 1], ['ATM/DG/DG/000005/23', 0], ['ATM/DG/DDF/000006/23', 1]
];
const marks = on => `<div class="marks">${icon('mark')}${on ? icon('star', 'gold') : icon('star-line')}</div>`;
fill('mails', mails.map(([ref, on]) => `<article class="card mail">${icon('doc')}<span>${ref}</span>${marks(on)}</article>`).join(''));

const codes = ['P', 'MUT', 'SUS', 'FOR', 'CA', 'CE', 'RC', 'CS', 'MIS', 'ABR', 'F', 'RUP', 'PA', 'ABI', 'ANR', 'MAC', 'MAT', 'FC', 'MD', 'W', 'DT', 'EL', '', ''];
fill('codes', codes.map(c => `<button>${c}</button>`).join(''));

const chip = n => `<div class="chip">${icon('pdf')}<span>(${n})</span><button aria-label="Retirer">${icon('cross')}</button></div>`;
fill('chipsA', [1, 2, 3].map(chip).join(''));
fill('chipsB', [1, 2, 3, 4, 5, 6, 7].map(chip).join(''));

const traces = ['000000', '000000', '000000', '000001', '000001', '000001'];
fill('traces', traces.map(n => `<article class="card tr">${icon('route')}<p>Ajouter un courrier\nATM/DG/DG/${n}/23\n2023-05-07</p></article>`).join(''));

const behind = [['23', 1, ''], ['23', 1, ''], ['23', 1, ''], ['23', 1, 'cut'], ['23', 1, 'short'], ['23', 0, ''], ['23', 1, ''], ['23', 0, ''], ['/23', 1, '']];
fill('behind', behind.map(([t, on, cls]) => `<div class="b-card ${cls}">${t}${marks(on)}</div>`).join(''));

const usual = 'P P P P W W P P P P P W W P P P P P W W P P P P P W W P P P P';
const people = [
  ['Zakaria', 'Ilyes', 'P FOR FOR FOR W W CS CS CS CS CS W W MAC MAC MAC MAC P W W P P P P P W W P P P P', 'tall'],
  ['Walid', 'hamid', usual, ''],
  ['Nofel', 'said', usual.replace(/P/g, 'CA'), 'mid'],
  ['Mohamed', 'nadir', usual, ''],
  ['Adem', 'nazim', usual, ''],
  ['Aymen', 'Ibrahim', 'P P P P W W P P P P FC W W FC FC FC FC FC W W FC FC FC FC FC W W P P FC FC', '']
];
const stacked = ['FOR', 'MAC', 'CA'];
const days = Array.from({ length: 31 }, (_, i) => `<th>${i + 1}</th>`).join('');
const rows = people.map(([last, first, marks, cls]) => `<tr class="${cls}"><td class="nm">${last}</td><td class="nm">${first}</td>${
  marks.split(' ').map(m => `<td>${stacked.includes(m) ? m.split('').join('<br>') : m}</td>`).join('')}</tr>`).join('');
document.querySelectorAll('[data-att]').forEach(t => {
  t.innerHTML = `<thead><tr><th class="nm">Nom</th><th class="nm">Prénom</th>${days}</tr></thead><tbody>${rows}</tbody>`;
});

const legend = [
  ['MUT', 'MUTATION'], ['SUS', 'SUSPENDU DE SES<br>FONCTIONS'], ['FOR', 'FORMATION'], ['CA', 'CONGE ANNUEL'], ['CE', 'CONGE EXEPTIONNEL'],
  ['RC', 'RÉCUPERATION'], ['CS', 'CONGE SANS SOLDE'], ['MIS', 'MISSION COMMANDEE'], ['ABR', 'ABSENCE REMUNEREE'], ['F', 'JOUR FERIER'],
  ['RUP', 'RUPTURE DE CONTRAT'], ['PA', 'PRÉSENT DEMI<br>JOURNEE'], ['ABI', 'ABSENCE IRREGULIERE'], ['ANR', 'ABSENCE AUTORISEE'],
  ['MAC', 'MALADIE'], ['P', 'PRÉSENT'], ['MAT', 'CONGE MATERNITE'], ['FC', 'FIN DE CONTRAT'], ['MD', 'MISE EN DISPONIBILITE'],
  ['W', 'WEEK-END'], ['DT', 'DÉTACHÉ'], ['EL', 'ÉLECTION']
];
fill('legend', '<tr><th>code</th><th>Réference</th></tr>' + legend.map(([c, t]) =>
  `<tr class="${t.includes('<br>') ? 'two' : ''}"><td>${c}</td><td>${t}</td></tr>`).join(''));
```
